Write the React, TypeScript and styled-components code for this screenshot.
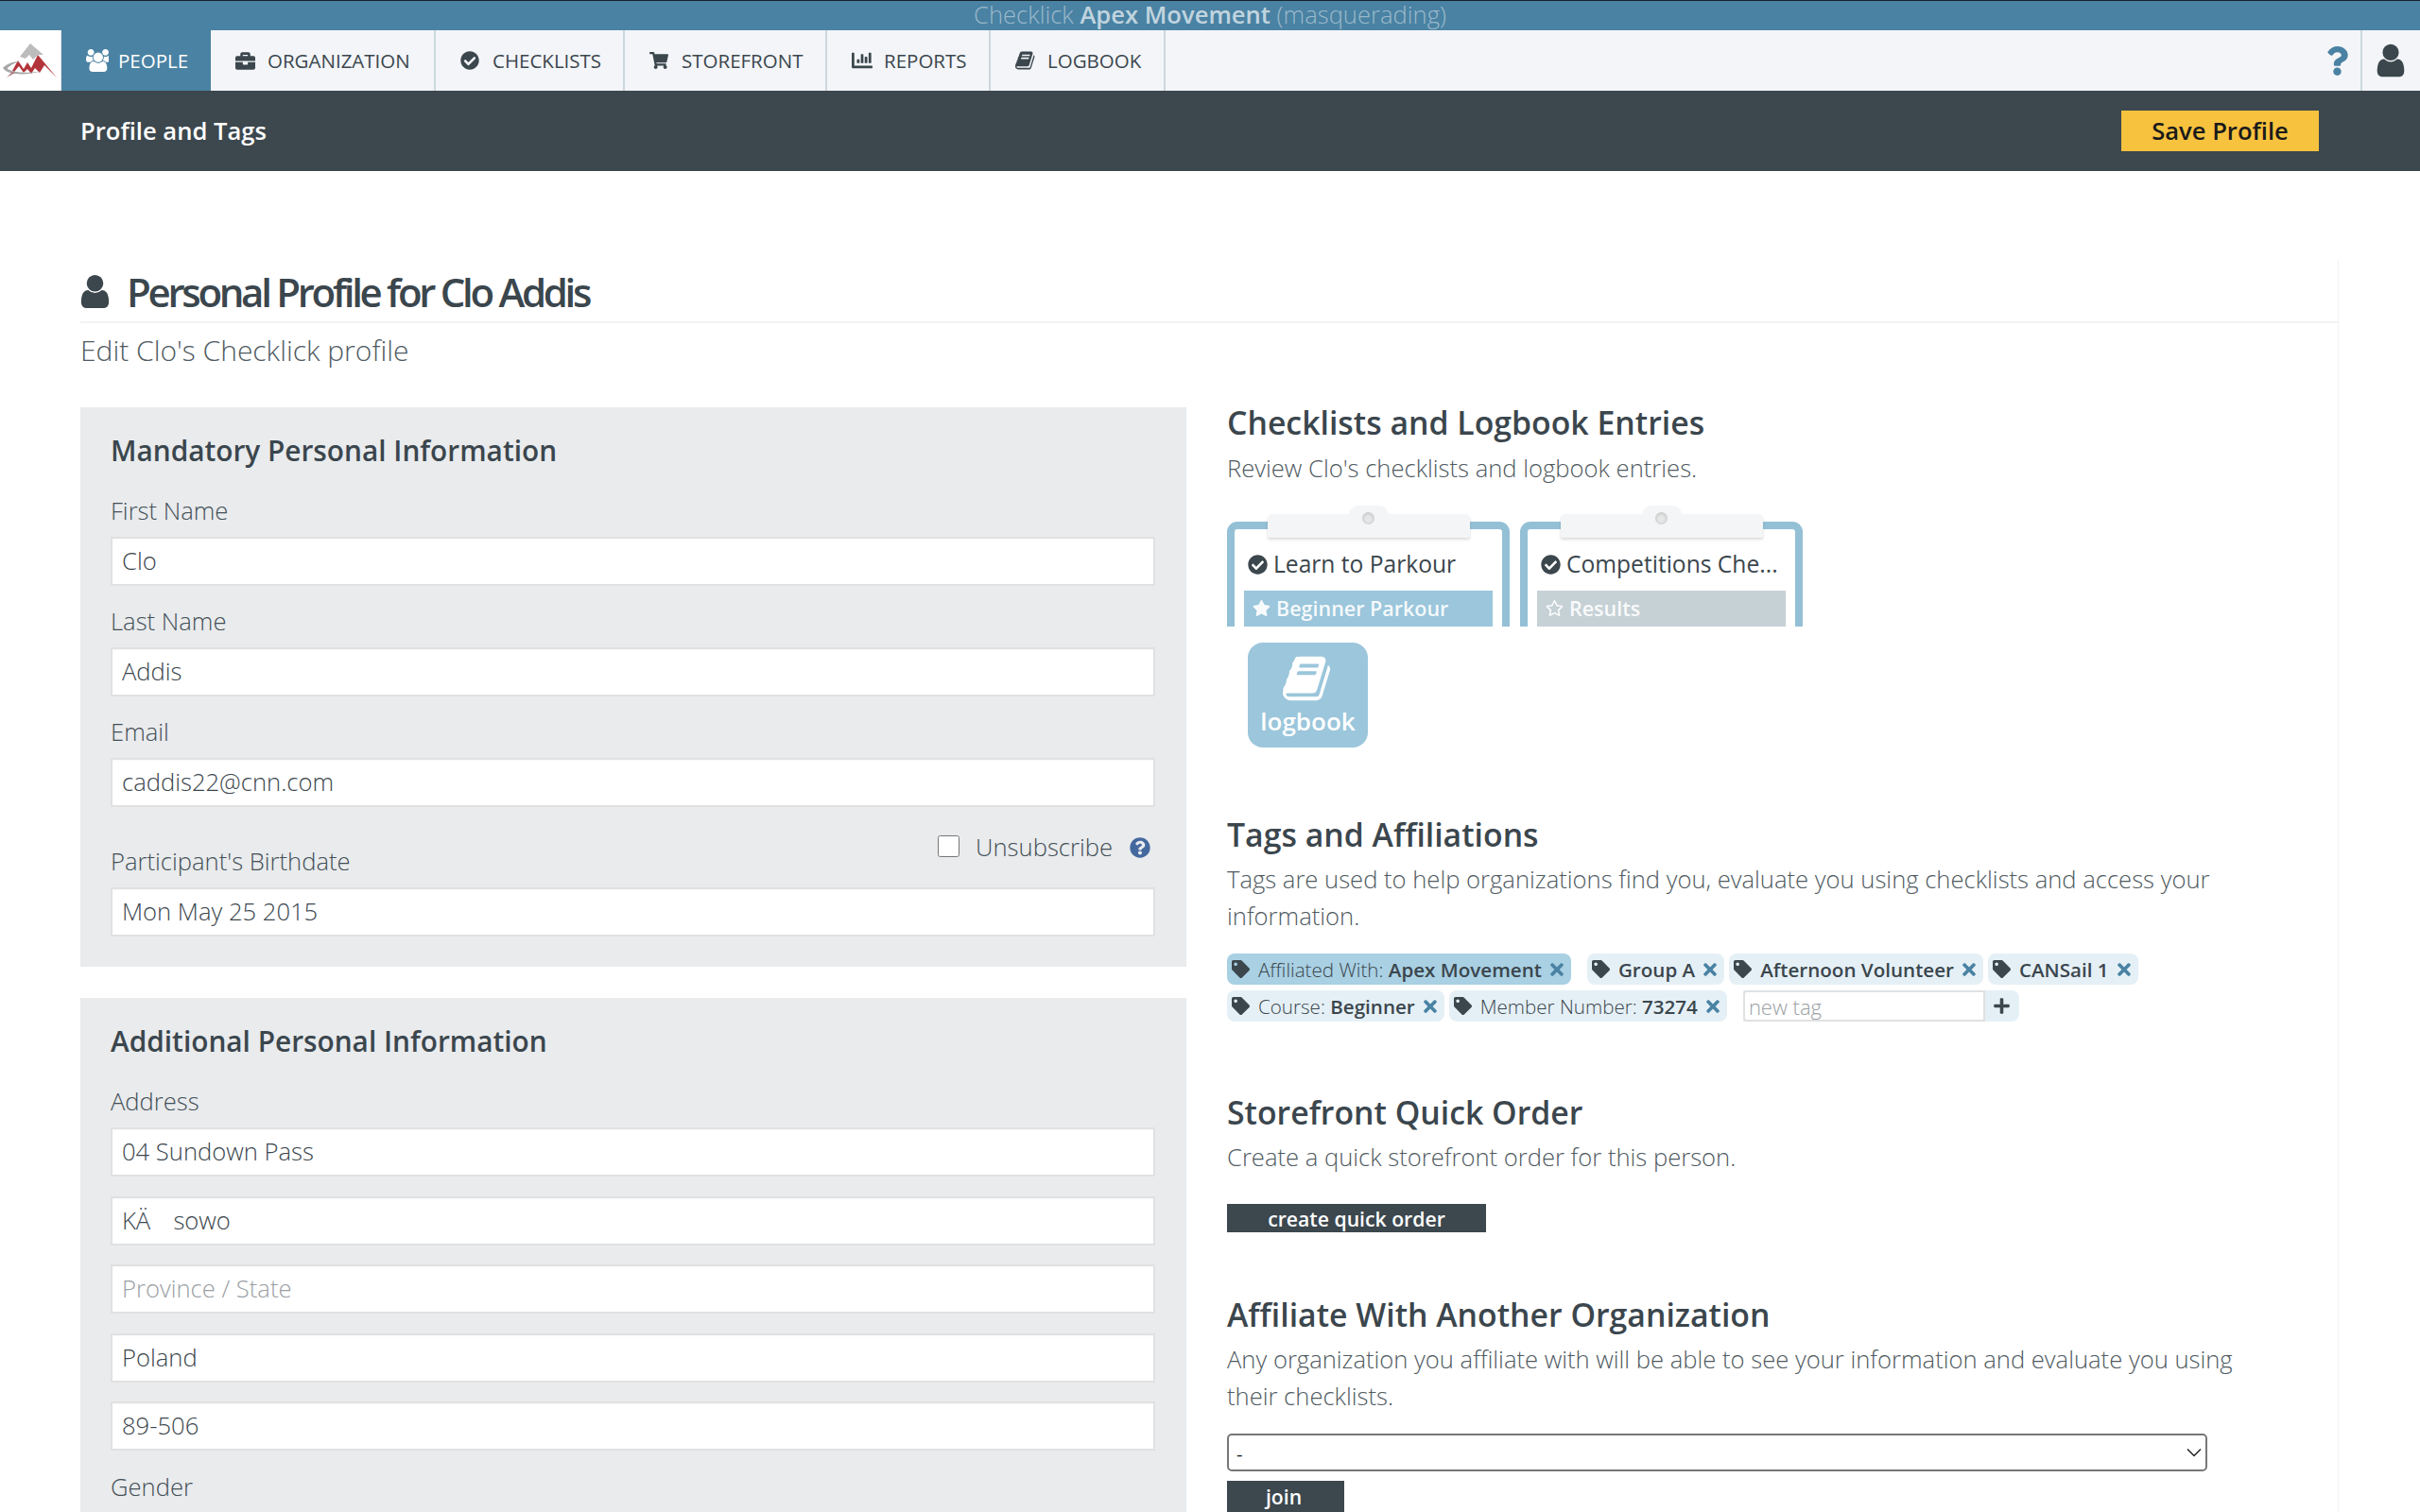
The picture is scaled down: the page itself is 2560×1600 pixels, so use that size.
import React from "react";
import styled, { createGlobalStyle } from "styled-components";
import {
  FaBriefcase,
  FaChartBar,
  FaCheckCircle,
  FaPlus,
  FaQuestion,
  FaQuestionCircle,
  FaRegStar,
  FaShoppingCart,
  FaStar,
  FaTag,
  FaTimes,
} from "react-icons/fa";

const GlobalStyle = createGlobalStyle`
  html, body {
    margin: 0;
    height: 1600px;
    overflow: hidden;
    background: #fff;
    font-family: "Open Sans", "Liberation Sans", sans-serif;
    color: #3b464d;
  }
  * {
    box-sizing: border-box;
  }
`;

const USER_PATH =
  "M1536 1399q0 109-62.5 187t-150.5 78h-854q-88 0-150.5-78t-62.5-187q0-85 8.5-160.5t31.5-152 58.5-131 94-89 134.5-34.5q131 128 313 128t313-128q76 0 134.5 34.5t94 89 58.5 131 31.5 152 8.5 160.5zm-256-887q0 159-112.5 271.5t-271.5 112.5-271.5-112.5-112.5-271.5 112.5-271.5 271.5-112.5 271.5 112.5 112.5 271.5z";
const USERS_PATH =
  "M593 896q-162 5-265 128h-134q-82 0-138-40.5t-56-118.5q0-353 124-353 6 0 43.5 21t97.5 42.5 119 21.5q67 0 133-23-5 37-5 66 0 139 81 256zm1071 637q0 120-73 189.5t-194 69.5h-874q-121 0-194-69.5t-73-189.5q0-53 3.5-103.5t14-109 26.5-108.5 43-97.5 62-81 85.5-53.5 111.5-20q10 0 43 21.5t73 48 107 48 135 21.5 135-21.5 107-48 73-48 43-21.5q61 0 111.5 20t85.5 53.5 62 81 43 97.5 26.5 108.5 14 109 3.5 103.5zm-1024-1277q0 106-75 181t-181 75-181-75-75-181 75-181 181-75 181 75 75 181zm704 384q0 159-112.5 271.5t-271.5 112.5-271.5-112.5-112.5-271.5 112.5-271.5 271.5-112.5 271.5 112.5 112.5 271.5zm576 225q0 78-56 118.5t-138 40.5h-134q-103-123-265-128 81-117 81-256 0-29-5-66 66 23 133 23 59 0 119-21.5t97.5-42.5 43.5-21q124 0 124 353zm-128-609q0 106-75 181t-181 75-181-75-75-181 75-181 181-75 181 75 75 181z";
const BOOK_PATH =
  "M1639 478q40 57 18 129l-275 906q-19 64-76.5 107.5t-122.5 43.5h-923q-77 0-148.5-53.5t-99.5-131.5q-24-67-2-127 0-4 3-27t4-37q1-8-3-21.5t-3-19.5q2-11 8-21t16.5-23.5 16.5-23.5q23-38 45-91.5t30-91.5q3-10 .5-30t-.5-28q3-11 17-28t17-23q21-36 42-92t25-90q1-9-2.5-32t.5-28q4-13 22-30.5t22-22.5q19-26 42.5-84.5t27.5-96.5q1-8-3-25.5t-2-26.5q2-8 9-18t18-23 17-21q8-12 16.5-30.5t15-35 16-36 19.5-32 26.5-23.5 36-11.5 47.5 5.5l-1 3q38-9 51-9h761q74 0 114 56t18 130l-274 906q-36 119-71.5 153.5t-128.5 34.5h-869q-27 0-38 15-11 16-1 43 24 70 144 70h923q29 0 56-15.5t35-41.5l300-987q7-22 5-57 38 15 59 43zm-1064 2q-4 13 2 22.5t20 9.5h608q13 0 25.5-9.5t16.5-22.5l21-64q4-13-2-22.5t-20-9.5h-608q-13 0-25.5 9.5t-16.5 22.5zm-83 256q-4 13 2 22.5t20 9.5h608q13 0 25.5-9.5t16.5-22.5l21-64q4-13-2-22.5t-20-9.5h-608q-13 0-25.5 9.5t-16.5 22.5z";

const CHEVRON =
  "url(\"data:image/svg+xml,%3Csvg xmlns='http://www.w3.org/2000/svg' width='16' height='10' viewBox='0 0 16 10'%3E%3Cpath d='M1 1.5 8 8.5 15 1.5' fill='none' stroke='%23222' stroke-width='1.5'/%3E%3C/svg%3E\")";

const FaGlyph = ({ d, size }: { d: string; size: number }) => (
  <svg width={size} height={size} viewBox="0 0 1792 1792" fill="currentColor">
    <path d={d} />
  </svg>
);

const Logo = () => (
  <svg width="65" height="64" viewBox="0 0 65 64">
    <path d="M32 14 21 28 27 30 31 26 35 31 40 26 46 26Z" fill="#bcbcbc" />
    <path
      d="M13 43 19 32 25 41 29 34 33 40 40 26 60 50 47 37 42 45 37 40 33 46 29 41 25 45 20 38 15 44Z"
      fill="#b3333a"
    />
    <path
      d="M3 40C8 34 17 33 21 33 12 36 8 39 8 41 14 45 32 46 44 43 30 48 8 48 3 40Z"
      fill="#a8a8a8"
    />
    <path d="M7 50 13 44 16 45Z" fill="#b0777a" />
  </svg>
);

const TopStrip = styled.div`
  height: 32px;
  border-top: 1px solid #16222b;
  background: #4a82a3;
  color: rgba(255, 255, 255, 0.45);
  font-size: 25.6px;
  font-weight: 300;
  line-height: 30px;
  text-align: center;
  white-space: nowrap;

  b {
    font-weight: 600;
    color: rgba(255, 255, 255, 0.68);
  }
`;

const Nav = styled.nav`
  height: 64px;
  display: flex;
  background: #f3f5f8;
`;

const LogoCell = styled.div`
  width: 65px;
  background: #fff;
  border-right: 1px solid #dfe3e6;
  flex: none;
`;

const Tab = styled.a<{ $active?: boolean; $w: number }>`
  width: ${(p) => p.$w}px;
  flex: none;
  display: flex;
  align-items: center;
  padding-left: 26px;
  font-size: 20.5px;
  border-right: 2px solid ${(p) => (p.$active ? "#4a82a3" : "#ccd8de")};
  background: ${(p) => (p.$active ? "#4a82a3" : "transparent")};
  color: ${(p) => (p.$active ? "#fff" : "#3b464d")};
  text-transform: uppercase;
  white-space: nowrap;
`;

const TabIcon = styled.span`
  width: 34px;
  flex: none;
  display: flex;
  align-items: center;
`;

const NavRight = styled.div`
  margin-left: auto;
  display: flex;
  align-items: center;
`;

const HelpLink = styled.a`
  width: 44px;
  height: 64px;
  padding-left: 2px;
  display: flex;
  align-items: center;
  color: #4a82a3;
  font-size: 31px;
  border-right: 2px solid #ccd8de;
`;

const UserLink = styled.a`
  width: 61px;
  padding-left: 10px;
  display: flex;
  align-items: center;
  color: #3b464d;
`;

const SubHeader = styled.header`
  height: 85px;
  padding: 0 107px 0 85px;
  display: flex;
  align-items: center;
  justify-content: space-between;
  background: #3c474e;
  color: #fff;
  font-size: 25.6px;
  font-weight: 600;
`;

const SaveButton = styled.button`
  width: 209px;
  height: 43px;
  border: 0;
  padding: 0;
  background: #f7c23e;
  color: #1a1a1a;
  font-family: inherit;
  font-size: 25.6px;
  font-weight: 600;
`;

const Content = styled.main`
  width: 2389px;
  margin: 94px 0 0 85px;
  border-right: 1px solid #f2f3f4;
`;

const PageTitle = styled.h1`
  height: 67px;
  margin: 0;
  padding-top: 2px;
  display: flex;
  align-items: center;
  gap: 13px;
  border-bottom: 2px solid #f2f3f4;
  font-size: 42px;
  font-weight: 600;
  letter-spacing: -3.3px;

  svg {
    margin-left: -5px;
  }
`;

const PageSub = styled.p`
  margin: 9px 0 1px;
  font-size: 30px;
  font-weight: 300;
  line-height: 39px;
  color: #4f5a61;
`;

const Columns = styled.div`
  display: grid;
  grid-template-columns: 1170px 1fr;
  column-gap: 43px;
`;

const LeftCol = styled.div`
  padding-top: 40px;
  display: flex;
  flex-direction: column;
  gap: 33px;
`;

const RightCol = styled.div`
  padding-top: 36px;
`;

const Panel = styled.section`
  background: #e9ebed;
  padding: 26px 33px 32px 32px;
`;

const PanelTitle = styled.h3`
  margin: 0 0 24px;
  font-size: 29.8px;
  font-weight: 600;
  line-height: 40px;
`;

const Field = styled.div`
  margin-bottom: 18px;

  &:last-child {
    margin-bottom: 0;
  }
`;

const Label = styled.label`
  display: block;
  margin-bottom: 7px;
  font-size: 25.6px;
  font-weight: 300;
  line-height: 40px;
  color: #444f56;
`;

const BirthRow = styled.div`
  height: 60px;
  margin-bottom: 7px;
  display: flex;
  justify-content: space-between;
  align-items: flex-end;

  ${Label} {
    margin-bottom: 0;
  }
`;

const Unsubscribe = styled.div`
  align-self: flex-start;
  height: 49px;
  display: flex;
  align-items: center;
  padding-right: 5px;
  font-size: 25.6px;
  font-weight: 300;
  color: #444f56;

  svg {
    margin-left: 18px;
    color: #44699e;
    font-size: 22px;
  }
`;

const CheckBox = styled.input`
  width: 23px;
  height: 23px;
  margin: 0 17px 3px 0;
`;

const TextInput = styled.input`
  display: block;
  width: 100%;
  height: 52px;
  padding: 0 10px 1px;
  border: 2px solid #e0e1e2;
  background: #fff;
  box-shadow: inset 0 1px 2px rgba(0, 0, 0, 0.03);
  font-family: inherit;
  font-size: 25.6px;
  font-weight: 300;
  color: #3b464d;

  &::placeholder {
    color: #9aa0a4;
  }
`;

const InputStack = styled.div`
  display: flex;
  flex-direction: column;
  gap: 20.5px;
  margin-bottom: 19px;
`;

const SectionTitle = styled.h3<{ $top?: number }>`
  margin: ${(p) => p.$top ?? 0}px 0 0;
  font-size: 33.8px;
  font-weight: 600;
  line-height: 40px;
`;

const SectionText = styled.p<{ $top?: number }>`
  max-width: 1100px;
  margin: ${(p) => p.$top ?? 8}px 0 0;
  font-size: 25.6px;
  font-weight: 300;
  line-height: 39px;
  color: #4f5a61;
`;

const Boards = styled.div`
  display: flex;
  gap: 11px;
  margin-top: 37px;
`;

const Board = styled.div`
  position: relative;
  width: 299px;
  height: 111px;
  padding: 0 10px;
  display: flex;
  flex-direction: column;
  justify-content: flex-end;
  background: #fff;
  border: 8px solid #94c0d6;
  border-bottom: 0;
  border-radius: 11px 11px 0 0;
`;

const Clip = styled.div`
  position: absolute;
  top: -16px;
  left: 35px;
  width: 214px;
  height: 25px;
  background: #f4f5f7;
  box-shadow: 0 2px 3px rgba(0, 0, 0, 0.14);
  border-radius: 5px 5px 2px 2px;

  &::before {
    content: "";
    position: absolute;
    left: 86px;
    top: -9px;
    width: 42px;
    height: 12px;
    background: #f4f5f7;
    border-radius: 10px 10px 0 0;
  }

  &::after {
    content: "";
    position: absolute;
    left: 100px;
    top: -2px;
    width: 13px;
    height: 13px;
    border-radius: 50%;
    background: radial-gradient(circle at 50% 55%, #e6e6e6 0 30%, #bdbfc0 90%);
  }
`;

const BoardTitle = styled.div`
  margin: 0 -4px 10px 4px;
  display: flex;
  align-items: center;
  gap: 6px;
  font-size: 24.6px;
  font-weight: 500;
  line-height: 36px;
  color: #3b464d;
  white-space: nowrap;

  svg {
    flex: none;
  }
`;

const BoardBand = styled.div<{ $muted?: boolean }>`
  height: 38px;
  padding: 0 0 1px 9px;
  display: flex;
  align-items: center;
  gap: 6px;
  background: ${(p) => (p.$muted ? "#c6d1d6" : "#9bc6db")};
  color: rgba(255, 255, 255, 0.92);
  font-size: 21.5px;
  font-weight: 600;
`;

const LogbookTile = styled.a`
  width: 127px;
  height: 111px;
  margin: 17px 0 0 22px;
  padding-top: 11px;
  display: flex;
  flex-direction: column;
  align-items: center;
  border-radius: 16px;
  background: #9bc6db;
  color: #fff;
  font-size: 26px;
  font-weight: 600;
  line-height: 36px;
`;

const TagRow = styled.div<{ $top?: number }>`
  display: flex;
  gap: 5px;
  margin-top: ${(p) => p.$top ?? 6}px;
`;

const Tag = styled.span<{ $selected?: boolean }>`
  height: 33px;
  padding: 0 5px 0 5px;
  display: inline-flex;
  align-items: center;
  gap: 9px;
  border-radius: 8px;
  background: ${(p) => (p.$selected ? "#a9d0e3" : "#e5f0f6")};
  margin-right: ${(p) => (p.$selected ? 12 : 0)}px;
  font-size: 20.6px;
  font-weight: 600;
  white-space: nowrap;

  i {
    font-style: normal;
    font-weight: 300;
  }

  > svg:last-child {
    margin-left: -3px;
    color: #4a82a3;
  }
`;

const TagInputWrap = styled.div`
  height: 33px;
  margin-left: 12px;
  display: flex;
  align-items: center;
  gap: 8px;
  padding-right: 9px;
  background: #e5f0f6;
  border-radius: 0 8px 8px 0;
  font-size: 19px;
`;

const TagInput = styled.input`
  width: 256px;
  height: 33px;
  padding: 0 4px;
  border: 2px solid #e0e1e2;
  border-radius: 4px 0 0 4px;
  background: #fff;
  font-family: inherit;
  font-size: 22px;
  font-weight: 300;

  &::placeholder {
    color: #9aa0a4;
  }
`;

const DarkButton = styled.button<{ $w: number; $h: number; $pad?: number; $top?: number }>`
  display: block;
  width: ${(p) => p.$w}px;
  height: ${(p) => p.$h}px;
  margin-top: ${(p) => p.$top ?? 0}px;
  border: 0;
  padding: 0 ${(p) => p.$pad ?? 0}px 0 0;
  background: #3c474e;
  color: #fff;
  font-family: inherit;
  font-size: 21.2px;
  font-weight: 600;
`;

const OrgSelect = styled.select`
  display: block;
  width: 1037px;
  height: 40px;
  margin: 20px 0 10px;
  padding: 2px 8px 0;
  appearance: none;
  background: #fff ${CHEVRON} no-repeat right 4px center;
  border: 2px solid #777;
  border-radius: 5px;
  font-family: inherit;
  font-size: 20px;
  color: #222;
`;

const tabs = [
  { label: "People", w: 158, icon: <FaGlyph d={USERS_PATH} size={24} />, active: true },
  { label: "Organization", w: 238, icon: <FaBriefcase size={21} /> },
  { label: "Checklists", w: 200, icon: <FaCheckCircle size={20} /> },
  { label: "Storefront", w: 214, icon: <FaShoppingCart size={20} /> },
  { label: "Reports", w: 173, icon: <FaChartBar size={22} /> },
  { label: "Logbook", w: 185, icon: <FaGlyph d={BOOK_PATH} size={22} /> },
];

const RemoveIcon = () => <FaTimes size={20} />;
const TagIcon = () => <FaTag size={19} />;

export default function App() {
  return (
    <>
      <GlobalStyle />
      <TopStrip>
        Checklick <b>Apex Movement</b> (masquerading)
      </TopStrip>
      <Nav>
        <LogoCell>
          <Logo />
        </LogoCell>
        {tabs.map((t) => (
          <Tab key={t.label} $active={t.active} $w={t.w}>
            <TabIcon>{t.icon}</TabIcon>
            {t.label}
          </Tab>
        ))}
        <NavRight>
          <HelpLink>
            <FaQuestion />
          </HelpLink>
          <UserLink>
            <FaGlyph d={USER_PATH} size={40} />
          </UserLink>
        </NavRight>
      </Nav>
      <SubHeader>
        Profile and Tags
        <SaveButton>Save Profile</SaveButton>
      </SubHeader>
      <Content>
        <PageTitle>
          <FaGlyph d={USER_PATH} size={41} />
          Personal Profile for Clo Addis
        </PageTitle>
        <PageSub>Edit Clo's Checklick profile</PageSub>
        <Columns>
          <LeftCol>
            <Panel>
              <PanelTitle>Mandatory Personal Information</PanelTitle>
              <Field>
                <Label>First Name</Label>
                <TextInput defaultValue="Clo" />
              </Field>
              <Field>
                <Label>Last Name</Label>
                <TextInput defaultValue="Addis" />
              </Field>
              <Field>
                <Label>Email</Label>
                <TextInput defaultValue="caddis22@cnn.com" />
              </Field>
              <Field>
                <BirthRow>
                  <Label>Participant's Birthdate</Label>
                  <Unsubscribe>
                    <CheckBox type="checkbox" />
                    Unsubscribe
                    <FaQuestionCircle />
                  </Unsubscribe>
                </BirthRow>
                <TextInput defaultValue="Mon May 25 2015" />
              </Field>
            </Panel>
            <Panel>
              <PanelTitle>Additional Personal Information</PanelTitle>
              <Label>Address</Label>
              <InputStack>
                <TextInput defaultValue="04 Sundown Pass" />
                <TextInput defaultValue={"KÄ\u00a0\u00a0\u00a0\u2009sowo"} />
                <TextInput placeholder="Province / State" />
                <TextInput defaultValue="Poland" />
                <TextInput defaultValue="89-506" />
              </InputStack>
              <Label>Gender</Label>
            </Panel>
          </LeftCol>
          <RightCol>
            <SectionTitle>Checklists and Logbook Entries</SectionTitle>
            <SectionText $top={9}>Review Clo's checklists and logbook entries.</SectionText>
            <Boards>
              <Board>
                <Clip />
                <BoardTitle>
                  <FaCheckCircle size={21} />
                  Learn to Parkour
                </BoardTitle>
                <BoardBand>
                  <FaStar size={19} />
                  Beginner Parkour
                </BoardBand>
              </Board>
              <Board>
                <Clip />
                <BoardTitle>
                  <FaCheckCircle size={21} />
                  Competitions Che...
                </BoardTitle>
                <BoardBand $muted>
                  <FaRegStar size={19} />
                  Results
                </BoardBand>
              </Board>
            </Boards>
            <LogbookTile>
              <FaGlyph d={BOOK_PATH} size={54} />
              logbook
            </LogbookTile>

            <SectionTitle $top={72}>Tags and Affiliations</SectionTitle>
            <SectionText>
              Tags are used to help organizations find you, evaluate you using checklists and
              access your information.
            </SectionText>
            <TagRow $top={20}>
              <Tag $selected>
                <TagIcon />
                <span>
                  <i>Affiliated With: </i>Apex Movement
                </span>
                <RemoveIcon />
              </Tag>
              <Tag>
                <TagIcon />
                <span>Group A</span>
                <RemoveIcon />
              </Tag>
              <Tag>
                <TagIcon />
                <span>Afternoon Volunteer</span>
                <RemoveIcon />
              </Tag>
              <Tag>
                <TagIcon />
                <span>CANSail 1</span>
                <RemoveIcon />
              </Tag>
            </TagRow>
            <TagRow>
              <Tag>
                <TagIcon />
                <span>
                  <i>Course: </i>Beginner
                </span>
                <RemoveIcon />
              </Tag>
              <Tag>
                <TagIcon />
                <span>
                  <i>Member Number: </i>73274
                </span>
                <RemoveIcon />
              </Tag>
              <TagInputWrap>
                <TagInput placeholder="new tag" />
                <FaPlus />
              </TagInputWrap>
            </TagRow>

            <SectionTitle $top={76}>Storefront Quick Order</SectionTitle>
            <SectionText>Create a quick storefront order for this person.</SectionText>
            <DarkButton $w={274} $h={30} $top={30}>
              create quick order
            </DarkButton>

            <SectionTitle $top={67}>Affiliate With Another Organization</SectionTitle>
            <SectionText>
              Any organization you affiliate with will be able to see your information and
              evaluate you using their checklists.
            </SectionText>
            <OrgSelect>
              <option>-</option>
            </OrgSelect>
            <DarkButton $w={124} $h={33} $pad={4}>
              join
            </DarkButton>
          </RightCol>
        </Columns>
      </Content>
    </>
  );
}
